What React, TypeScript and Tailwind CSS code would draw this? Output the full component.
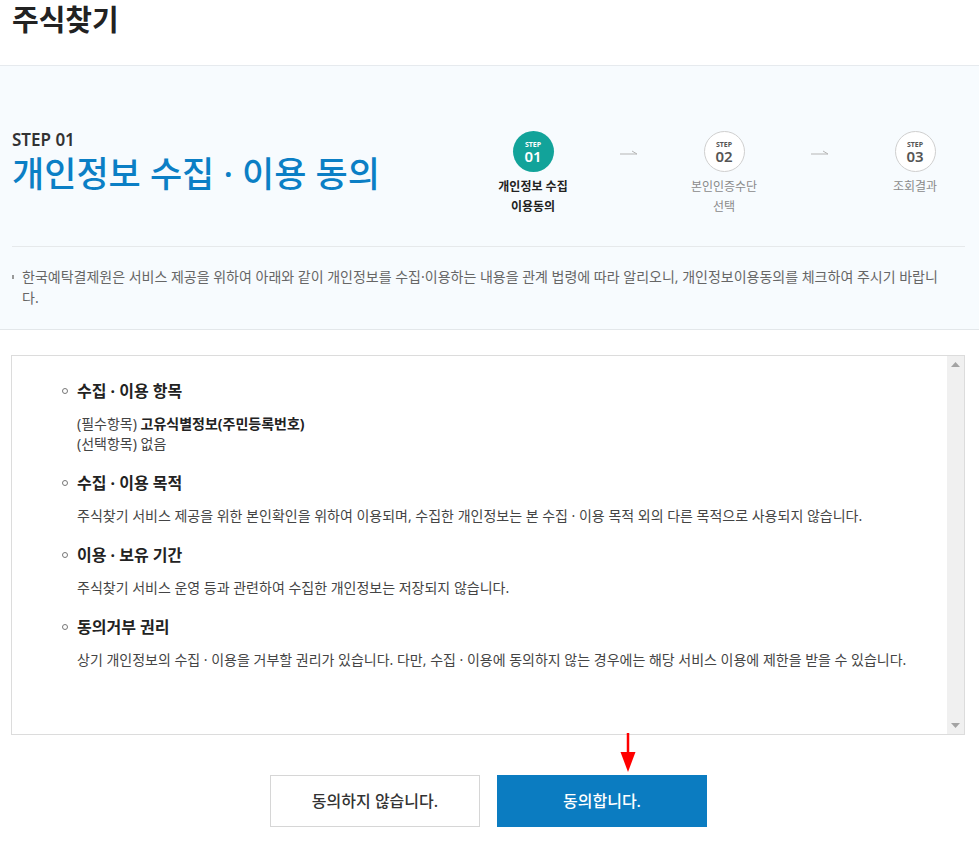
import React from 'react';

const font = { fontFamily: '"Noto Sans", "Noto Sans CJK KR", sans-serif' };

const steps = [
  { no: '01', label: ['개인정보 수집', '이용동의'], active: true },
  { no: '02', label: ['본인인증수단', '선택'], active: false },
  { no: '03', label: ['조회결과'], active: false },
];

const Arrow: React.FC = () => (
  <div className="flex h-[41px] w-[91px] items-center justify-center">
    <svg width="18" height="8" viewBox="0 0 18 8">
      <line x1="0" y1="6" x2="17" y2="6" stroke="#b5b5b5" strokeWidth="1" />
      <line x1="12" y1="3" x2="17" y2="6" stroke="#b5b5b5" strokeWidth="1" />
    </svg>
  </div>
);

const Step: React.FC<{ no: string; label: string[]; active: boolean }> = ({ no, label, active }) => (
  <div className="flex w-[100px] flex-col items-center">
    <div
      className={`flex h-[41px] w-[41px] flex-col items-center justify-center rounded-full ${
        active ? 'bg-[#12a39a] text-white' : 'border border-[#cfcfcf] bg-white text-[#555]'
      }`}
    >
      <span className="text-[7px] font-bold leading-[9px]">STEP</span>
      <span className="text-[15px] font-semibold leading-[15px]">{no}</span>
    </div>
    <div className={`mt-[5px] text-center text-[12px] leading-[20px] ${active ? 'font-bold text-[#222]' : 'text-[#8a8a8a]'}`}>
      {label.map((l) => (
        <div key={l}>{l}</div>
      ))}
    </div>
  </div>
);

const Item: React.FC<{ title: string; first?: boolean; children: React.ReactNode }> = ({ title, first, children }) => (
  <li className={first ? '' : 'mt-[19px]'}>
    <div className="flex items-center">
      <span className="ml-[-15px] mr-[9px] h-[6px] w-[6px] rounded-full border border-[#777]" />
      <span className="text-[16px] font-bold leading-[20px] text-[#222]">{title}</span>
    </div>
    <div className="mt-[13px] text-[14px] leading-[20px] text-[#444]">{children}</div>
  </li>
);

const Scrollbar: React.FC = () => (
  <div className="flex w-[17px] shrink-0 flex-col items-center justify-between bg-[#f0f0f0] py-[6px]">
    <svg width="9" height="5" viewBox="0 0 9 5">
      <polygon points="0,5 9,5 4.5,0" fill="#a3a3a3" />
    </svg>
    <svg width="9" height="5" viewBox="0 0 9 5">
      <polygon points="0,0 9,0 4.5,5" fill="#a3a3a3" />
    </svg>
  </div>
);

export default function App() {
  return (
    <div className="relative min-h-[845px] bg-white" style={font}>
      <div className="flex h-[66px] items-start border-b border-[#e6eaee] px-3 pt-[2px]">
        <h1 className="text-[29px] font-bold leading-[36px] text-[#222]">주식찾기</h1>
      </div>

      <div className="border-b border-[#e3e7ea] bg-[#f7fbfe] pl-3 pr-[14px]">
        <div className="flex h-[181px] items-center justify-between border-b border-[#e6e9eb]">
          <div className="mt-[12px]">
            <div className="text-[17px] font-semibold leading-[22px] text-[#333]">STEP 01</div>
            <div className="mt-[1px] text-[35px] font-medium leading-[44px] text-[#0b7fc5]">개인정보 수집 · 이용 동의</div>
          </div>
          <div className="mt-[36px] flex items-start">
            <Step {...steps[0]} />
            <Arrow />
            <Step {...steps[1]} />
            <Arrow />
            <Step {...steps[2]} />
          </div>
        </div>
        <div className="flex pb-[21px] pt-[19px]">
          <span className="mr-[8px] mt-[9px] h-[4px] w-[2px] shrink-0 bg-[#999]" />
          <p className="w-[925px] text-[14px] leading-[21px] text-[#666]">
            한국예탁결제원은 서비스 제공을 위하여 아래와 같이 개인정보를 수집·이용하는 내용을 관계 법령에 따라 알리오니, 개인정보이용동의를 체크하여 주시기 바랍니다.
          </p>
        </div>
      </div>

      <div className="pl-[11px] pr-[14px] pt-[25px]">
        <div className="flex h-[380px] border border-[#dcdcdc] bg-white">
          <ul className="flex-1 pl-[65px] pt-[25px]">
            <Item title="수집 · 이용 항목" first>
              <div>
                (필수항목) <span className="font-bold text-[#222]">고유식별정보(주민등록번호)</span>
              </div>
              <div>(선택항목) 없음</div>
            </Item>
            <Item title="수집 · 이용 목적">
              주식찾기 서비스 제공을 위한 본인확인을 위하여 이용되며, 수집한 개인정보는 본 수집 · 이용 목적 외의 다른 목적으로 사용되지 않습니다.
            </Item>
            <Item title="이용 · 보유 기간">주식찾기 서비스 운영 등과 관련하여 수집한 개인정보는 저장되지 않습니다.</Item>
            <Item title="동의거부 권리">
              상기 개인정보의 수집 · 이용을 거부할 권리가 있습니다. 다만, 수집 · 이용에 동의하지 않는 경우에는 해당 서비스 이용에 제한을 받을 수 있습니다.
            </Item>
          </ul>
          <Scrollbar />
        </div>
      </div>

      <div className="mt-[40px] flex justify-center gap-[17px] pr-[2px]">
        <button className="h-[52px] w-[210px] border border-[#d6d6d6] bg-white text-[16px] font-medium text-[#333]">
          동의하지 않습니다.
        </button>
        <button className="h-[52px] w-[210px] bg-[#0b7cc1] text-[16px] font-medium text-white">동의합니다.</button>
      </div>

      <svg className="absolute left-[620px] top-[733px]" width="16" height="40" viewBox="0 0 16 40">
        <line x1="8" y1="0" x2="8" y2="21" stroke="#f00" strokeWidth="2.5" />
        <polygon points="0.5,19 15.5,19 8,39" fill="#f00" />
      </svg>
    </div>
  );
}
